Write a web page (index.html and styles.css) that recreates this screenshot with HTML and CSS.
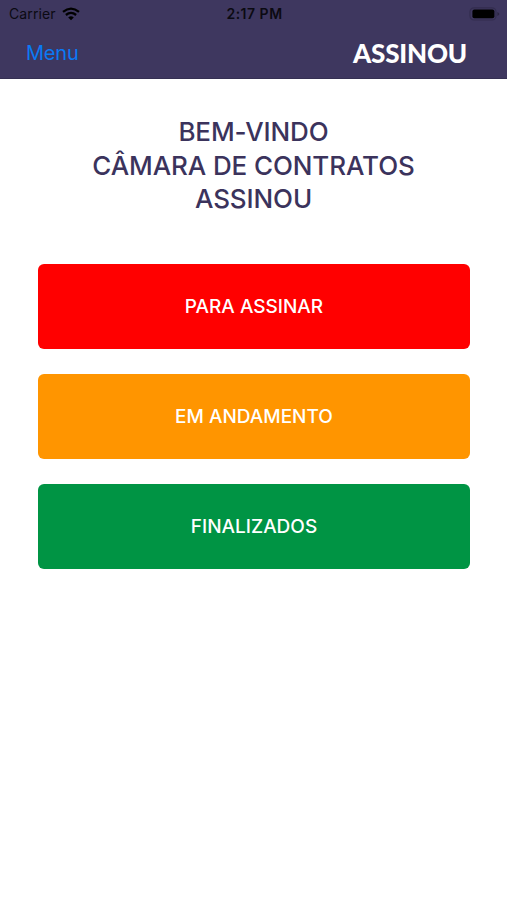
FILE: index.html
```html
<!DOCTYPE html>
<html lang="pt-BR">
<head>
    <meta charset="UTF-8">
    <meta name="viewport" content="width=device-width, initial-scale=1.0">
    <title>Assinou</title>
    <link rel="stylesheet" href="styles.css">
</head>
<body>

    <header>
        <div class="status-bar">
            <div class="carrier">
                <span>Carrier</span>
                <svg class="wifi" viewBox="0 0 18 14" width="18" height="14">
                    <path d="M1 4.9 Q9 -1.7 17 4.9" />
                    <path d="M3.9 8 Q9 3.7 14.1 8" />
                    <path class="dot" d="M6.2 10.4 Q9 8.2 11.8 10.4 L9 13.3 Z" />
                </svg>
            </div>
            <span class="time">2:17 PM</span>
            <svg class="battery" viewBox="0 0 31 14" width="31" height="14">
                <rect class="shell" x="1" y="0.8" width="26" height="12.2" rx="4" />
                <rect x="3.4" y="2.6" width="22" height="8.6" rx="2" />
                <path d="M28.4 5 Q30.4 6 30.4 7 Q30.4 8 28.4 9 Z" opacity="0.3" />
            </svg>
        </div>
        <nav class="nav-bar">
            <a class="menu" href="#">Menu</a>
            <span class="logo">ASSINOU</span>
        </nav>
    </header>

    <main>
        <h1>BEM-VINDO<br>CÂMARA DE CONTRATOS<br>ASSINOU</h1>

        <div class="buttons">
            <button type="button" class="sign">PARA ASSINAR</button>
            <button type="button" class="progress">EM ANDAMENTO</button>
            <button type="button" class="done">FINALIZADOS</button>
        </div>
    </main>

</body>
</html>
```

FILE: styles.css
```css
body {
    font-family: Inter, "Liberation Sans", sans-serif;
    margin: 0;
    background-color: #ffffff;
}

header {
    height: 79px;
    background-color: #3e375f;
    box-sizing: border-box;
    border-bottom: 1px solid #353052;
}

.status-bar {
    display: grid;
    grid-template-columns: 1fr auto 1fr;
    align-items: center;
    height: 27px;
    padding: 0 7px 0 9px;
    color: #0b0a12;
    font-size: 14px;
}

.carrier {
    display: flex;
    align-items: center;
    gap: 6px;
    letter-spacing: 0.1px;
}

.wifi path {
    fill: none;
    stroke: #000000;
    stroke-width: 2.3;
}

.wifi .dot {
    fill: #000000;
    stroke: none;
}

.time {
    font-weight: 600;
    letter-spacing: 0.5px;
}

.battery {
    justify-self: end;
}

.battery .shell {
    fill: none;
    stroke: #332d4f;
    stroke-width: 1.2;
}

.nav-bar {
    display: flex;
    justify-content: space-between;
    align-items: center;
    height: 51px;
    padding: 0 40px 0 26px;
}

.menu {
    color: #0a7af5;
    font-size: 20px;
    letter-spacing: -0.2px;
    text-decoration: none;
}

.logo {
    font-family: Lato, sans-serif;
    font-size: 26px;
    font-weight: 900;
    letter-spacing: -0.2px;
    color: #ffffff;
}

main {
    padding: 36px 37px 0 38px;
}

h1 {
    margin: 0 1px 48px 0;
    text-align: center;
    font-size: 26px;
    font-weight: 550;
    letter-spacing: -0.1px;
    line-height: 33.5px;
    color: #3b335c;
}

.buttons {
    display: flex;
    flex-direction: column;
    gap: 25px;
}

button {
    height: 85px;
    border: none;
    border-radius: 6px;
    color: #ffffff;
    font-family: inherit;
    font-size: 19px;
    font-weight: 550;
}

.sign {
    background-color: #ff0000;
}

.progress {
    background-color: #ff9500;
}

.done {
    background-color: #009444;
}
```
